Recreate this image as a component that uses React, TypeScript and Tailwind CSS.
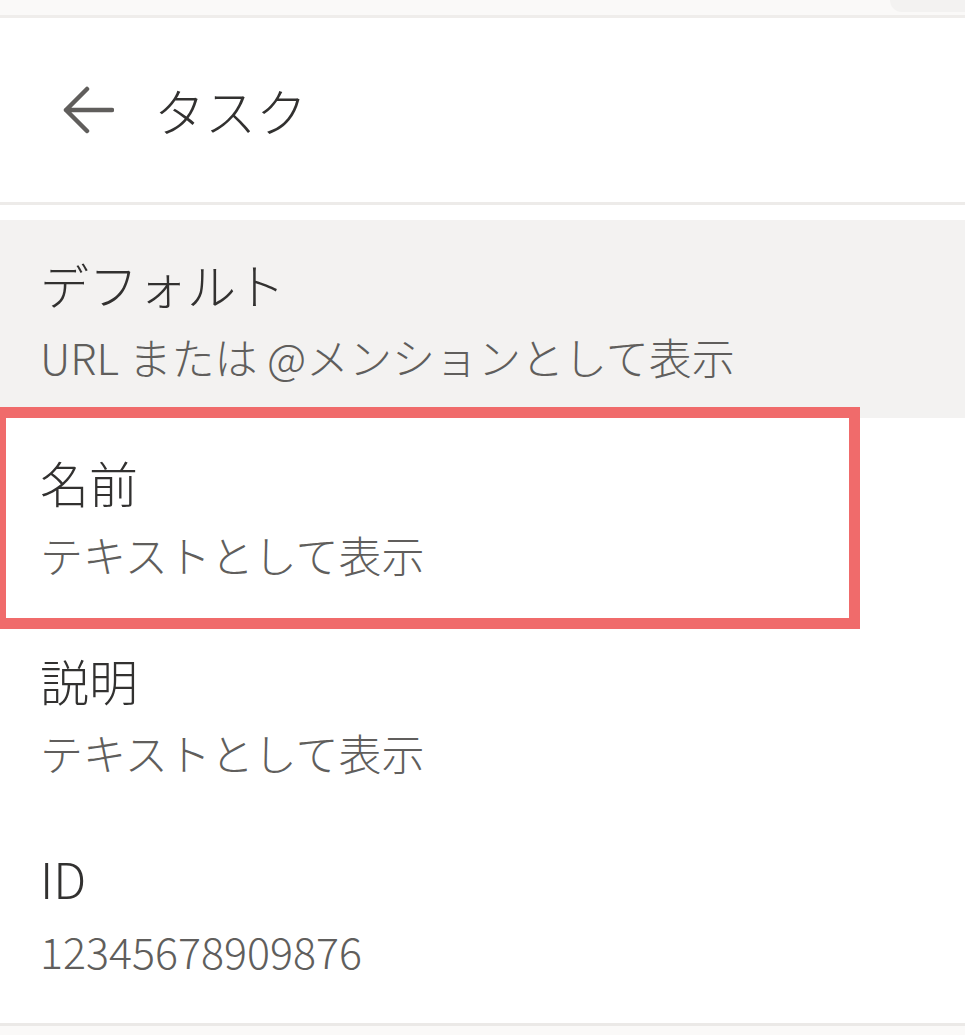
/**
 * 詳細パネルの1行分
 */
interface FieldRowProps {
  label: string;
  value: string;
  selected?: boolean;
  highlighted?: boolean;
  valueClassName?: string;
}

function FieldRow({ label, value, selected, highlighted, valueClassName }: FieldRowProps) {
  return (
    <div
      className={
        selected
          ? "relative h-[198px] bg-[#f3f2f1] pl-[40px] pt-[35px]"
          : "relative h-[198px] bg-white pl-[40px] pt-[35px]"
      }
    >
      <div className="text-[49px] font-light leading-[58px] text-[#323130]">{label}</div>
      <div
        className={
          valueClassName ??
          "mt-[14px] text-[43px] font-light leading-[58px] text-[#605e5c]"
        }
      >
        {value}
      </div>

      {/* 注目枠（スクリーンショット上の赤い囲み） */}
      {highlighted && (
        <div className="pointer-events-none absolute left-[-5px] top-[-11px] z-10 h-[222px] w-[865px] border-[11px] border-[#f06b6b]" />
      )}
    </div>
  );
}

export default function App() {
  return (
    <div
      className="h-[1035px] w-[965px] overflow-hidden bg-white"
      style={{ fontFamily: '"Noto Sans CJK JP", "Noto Sans", sans-serif' }}
    >
      {/* 上部の帯 */}
      <div className="flex h-[18px] justify-end border-b-[3px] border-[#efedeb] bg-[#faf9f8]">
        <div className="h-[12px] w-[75px] rounded-bl-[14px] bg-[#f3f2f1]" />
      </div>

      {/* ヘッダー */}
      <div className="flex h-[187px] items-center border-b-[3px] border-[#edebe9] pl-[62px]">
        <svg width="52" height="48" viewBox="0 0 52 48" fill="none" className="shrink-0">
          <path
            d="M25 3 L4 24 L25 45 M4 24 H50"
            stroke="#605e5c"
            strokeWidth="4.5"
            strokeLinecap="round"
            strokeLinejoin="round"
          />
        </svg>
        <span className="ml-[40px] text-[51px] font-light leading-none text-[#323130]">
          タスク
        </span>
      </div>

      <div className="h-[15px]" />

      {/* フィールド一覧 */}
      <FieldRow label="デフォルト" value="URL または @メンションとして表示" selected />
      <FieldRow label="名前" value="テキストとして表示" highlighted />
      <FieldRow label="説明" value="テキストとして表示" />
      <FieldRow
        label="ID"
        value="12345678909876"
        valueClassName="mt-[14px] text-[43px] font-light leading-[58px] text-[#605e5c]"
      />

      <div className="h-[11px]" />
      <div className="h-[3px] bg-[#ebe9e7]" />
      <div className="h-[10px] bg-[#faf9f8]" />
    </div>
  );
}
